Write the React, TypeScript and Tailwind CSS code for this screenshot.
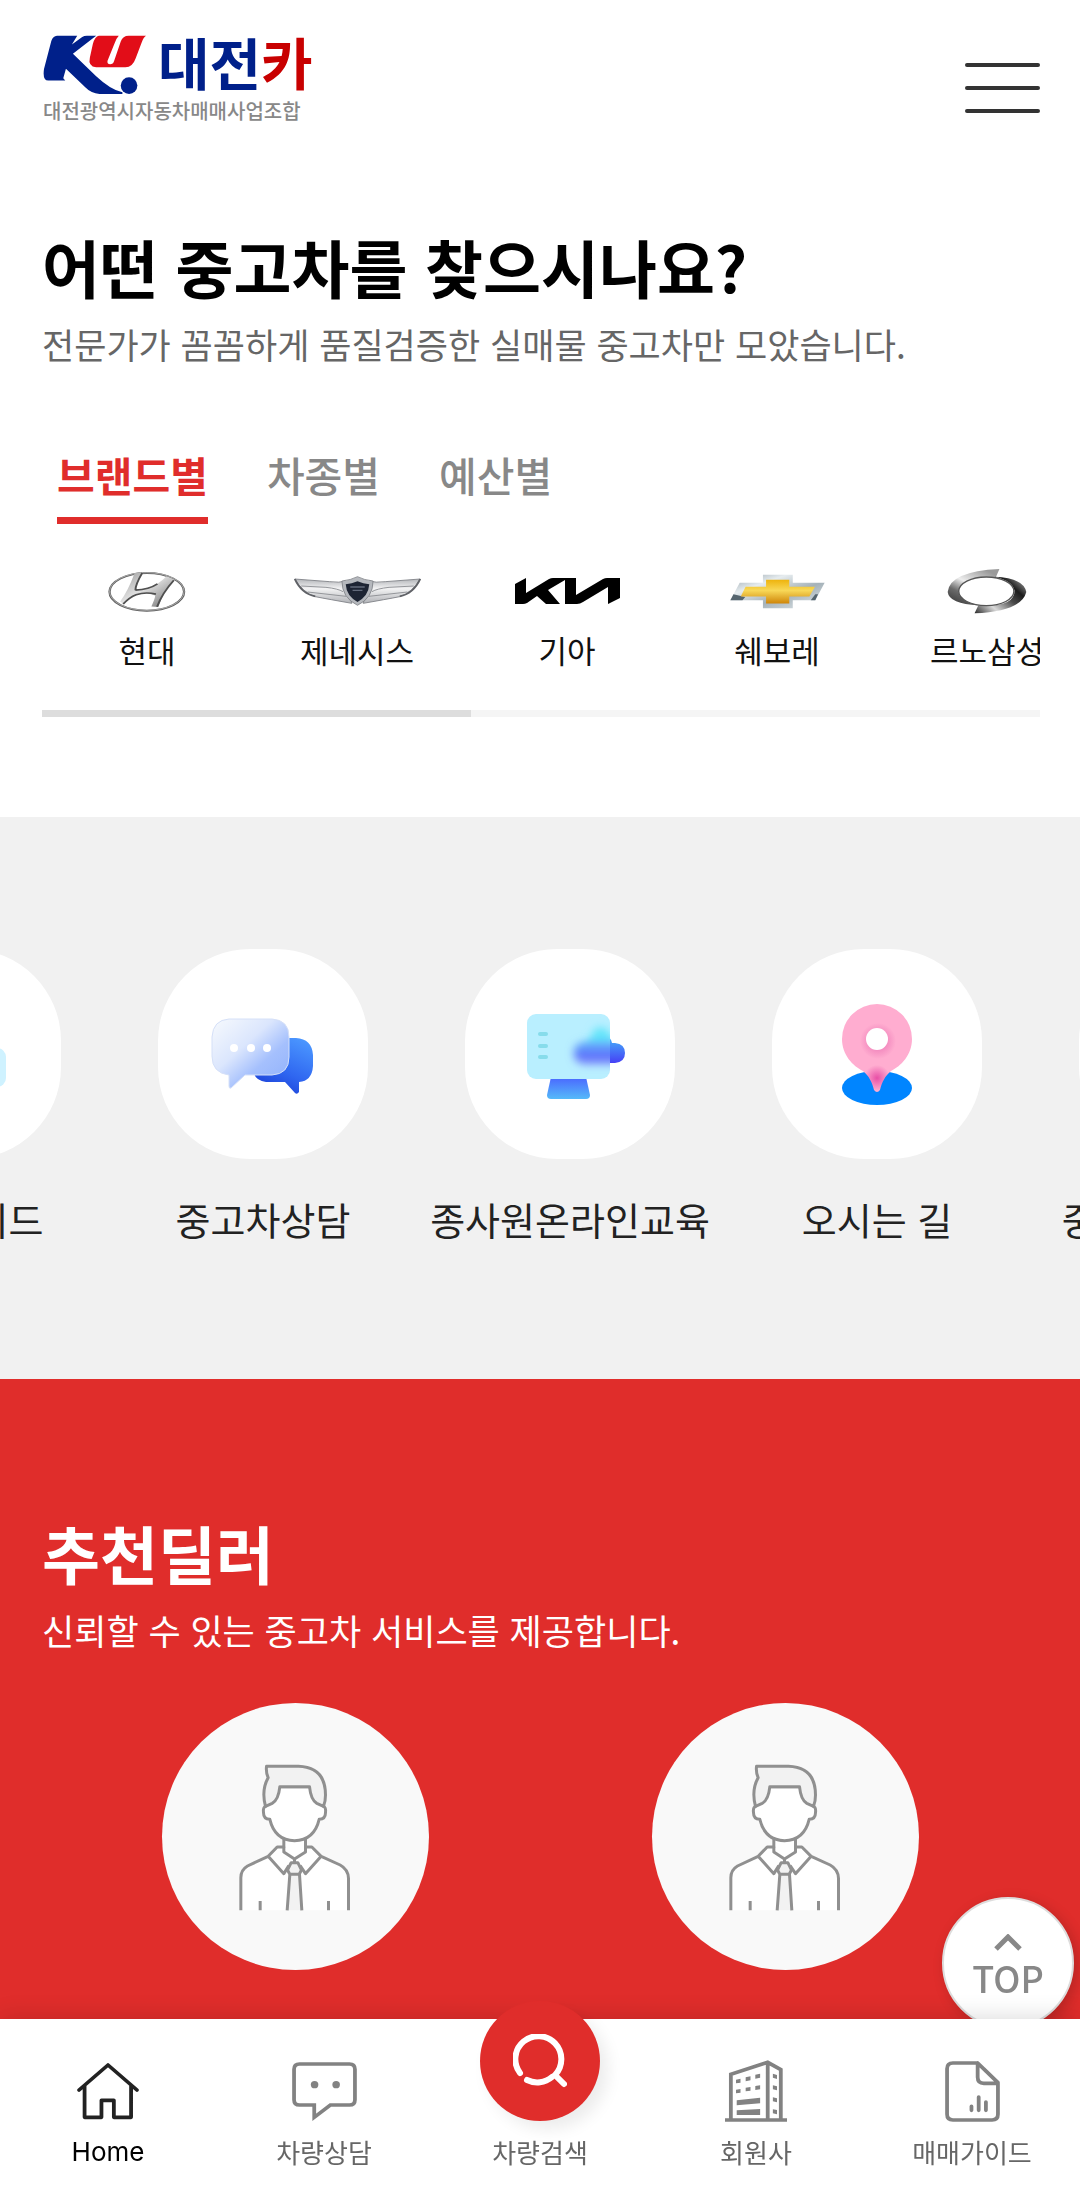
import React from "react";

const FONT = "font-['Noto_Sans_CJK_KR','Noto_Sans',sans-serif]";

function LogoMark() {
  return (
    <svg viewBox="130 108 310 180" className="h-[60px] w-[103px]" aria-hidden="true">
      <path
        fill="#00208a"
        d="M172 110H233L217 136L248 114Q254 110 262 110H290L220 164L290 232Q335 274 369 280V285H300Q275 284 258 266L199 209L191 238L197 245H146Q128 244 133 210L155 126Q160 111 172 110Z"
      />
      <path
        fill="#e20d18"
        d="M298 110H358Q350 118 344 136L324 186Q323 196 332 196Q341 196 344 186L364 127Q370 110 388 110H440Q433 114 427 130L409 178Q400 205 378 205H290Q265 202 271 176L280 135Q286 112 298 110Z"
      />
      <circle cx="389" cy="260" r="25" fill="#00208a" />
    </svg>
  );
}

function HyundaiLogo() {
  return (
    <svg viewBox="280 428 205 124" preserveAspectRatio="none" className="h-[41px] w-[78px]" aria-hidden="true">
      <defs>
        <linearGradient id="hy" x1="0" y1="0" x2="1" y2="1">
          <stop offset="0" stopColor="#9a9a9a" />
          <stop offset=".45" stopColor="#e0e0e0" />
          <stop offset="1" stopColor="#6a6a6a" />
        </linearGradient>
      </defs>
      <ellipse cx="382" cy="491" rx="98" ry="57" fill="none" stroke="#5e5e5e" strokeWidth="6" />
      <ellipse cx="382" cy="490" rx="98" ry="57" fill="none" stroke="#c4c4c4" strokeWidth="2" />
      <path
        fill="url(#hy)"
        d="M350 434L372 432Q352 470 355 484Q385 484 408 468Q424 456 434 444L455 454Q430 480 412 537L394 535Q404 510 404 502Q376 490 350 502Q334 512 322 529L312 520Q332 490 350 434Z"
      />
      <path
        d="M370 434Q352 470 352 486M320 528Q336 508 354 500Q378 490 406 498M409 536Q422 496 453 456M352 486Q388 484 410 467"
        fill="none"
        stroke="#4f4f4f"
        strokeWidth="5"
      />
    </svg>
  );
}

function GenesisLogo() {
  return (
    <svg viewBox="766 440 334 90" preserveAspectRatio="none" className="h-[30px] w-[127px]" aria-hidden="true">
      <defs>
        <linearGradient id="ge" x1="0" y1="0" x2="0" y2="1">
          <stop offset="0" stopColor="#b4b6ba" />
          <stop offset=".4" stopColor="#f3f3f4" />
          <stop offset="1" stopColor="#b0b2b6" />
        </linearGradient>
      </defs>
      <g fill="url(#ge)" stroke="#808288" strokeWidth="2.5">
        <path d="M768 449L860 457Q886 461 902 455L918 522Q858 510 822 502Q790 490 768 449Z" />
        <path d="M1098 449L1006 457Q980 461 964 455L948 522Q1008 510 1044 502Q1076 490 1098 449Z" />
      </g>
      <path d="M768 449Q786 494 822 501M1098 449Q1080 494 1044 501" fill="none" stroke="#5f6166" strokeWidth="5" />
      <path
        d="M785 470L850 474Q882 478 895 487M802 488L903 501M1081 470L1016 474Q984 478 971 487M1064 488L963 501"
        stroke="#8a8c91"
        strokeWidth="2.5"
        fill="none"
      />
      <path d="M933 442Q950 452 974 455Q974 505 933 528Q892 505 892 455Q916 452 933 442Z" fill="#b5b8bd" stroke="#74777c" strokeWidth="2" />
      <path d="M933 456Q948 463 964 465Q962 500 933 518Q904 500 902 465Q918 463 933 456Z" fill="#1d2433" />
      <path d="M914 473H952M920 483H946" stroke="#626a7b" strokeWidth="4" />
    </svg>
  );
}

function KiaLogo() {
  return (
    <svg viewBox="0 0 105 26" className="h-[26px] w-[105px]" aria-hidden="true">
      <path
        fill="#000"
        d="M0 6L11 0V15L34 1Q36 0 38 0H61V17L88 1Q90 0 92 0H105V20L93 26V9L68 24Q65 26 62 26H50V2L33 12L45 26H31L22 18L12 25Q10 26 8 26H0Z"
      />
    </svg>
  );
}

function ChevroletLogo() {
  return (
    <svg viewBox="552 100 274 104" preserveAspectRatio="none" className="h-[35px] w-[95px]" aria-hidden="true">
      <defs>
        <linearGradient id="ch" x1="0" y1="0" x2="0" y2="1">
          <stop offset="0" stopColor="#eeb30c" />
          <stop offset=".45" stopColor="#f8d858" />
          <stop offset="1" stopColor="#cf8508" />
        </linearGradient>
        <linearGradient id="chs" x1="0" y1="0" x2="1" y2="1">
          <stop offset="0" stopColor="#8d9ba3" />
          <stop offset=".3" stopColor="#e6ecef" />
          <stop offset=".6" stopColor="#a5b2b9" />
          <stop offset="1" stopColor="#e3e9ec" />
        </linearGradient>
      </defs>
      <path fill="url(#chs)" d="M647 102H733V126H825L798 178H733V202H647V178H553L580 126H647Z" />
      <path fill="#55656f" d="M553 178L562 160L596 168L588 178ZM785 178L798 160L806 160L798 178Z" />
      <path fill="url(#ch)" d="M656 117H723V138H797L781 167H723V188H656V167H583L597 138H656Z" />
    </svg>
  );
}

function RenaultLogo() {
  return (
    <svg viewBox="1182 84 232 138" preserveAspectRatio="none" className="h-[46px] w-[80px]" aria-hidden="true">
      <defs>
        <linearGradient id="re" x1="0" y1="1" x2=".7" y2="0">
          <stop offset="0" stopColor="#2e2e2e" />
          <stop offset=".35" stopColor="#6a6a6a" />
          <stop offset=".6" stopColor="#ededed" />
          <stop offset="1" stopColor="#9a9a9a" />
        </linearGradient>
        <linearGradient id="re2" x1="0" y1="1" x2="1" y2=".2">
          <stop offset="0" stopColor="#2a2a2a" />
          <stop offset=".3" stopColor="#dadada" />
          <stop offset=".6" stopColor="#4a4a4a" />
          <stop offset=".8" stopColor="#1c1c1c" />
          <stop offset="1" stopColor="#8a8a8a" />
        </linearGradient>
      </defs>
      <path fill="url(#re)" d="M1334 87L1324 111Q1218 104 1216 158Q1222 184 1274 196Q1188 192 1184 156Q1190 94 1334 87Z" />
      <path fill="url(#re2)" d="M1262 220L1273 196Q1378 202 1378 152Q1372 122 1320 110Q1404 114 1412 156Q1398 214 1262 220Z" />
      <ellipse cx="1296" cy="154" rx="80" ry="43" fill="none" stroke="#555" strokeWidth="4" />
    </svg>
  );
}

function GuideArt() {
  return (
    <svg viewBox="0 0 210 210" className="size-full" aria-hidden="true">
      <rect x="62" y="72" width="76" height="62" rx="10" fill="#8fdcff" />
      <rect x="98" y="99" width="57" height="39" rx="9" fill="#cff2ff" />
    </svg>
  );
}

function ChatArt() {
  return (
    <svg viewBox="0 0 210 210" className="size-full" aria-hidden="true">
      <defs>
        <linearGradient id="dk" x1=".8" y1="0" x2=".3" y2="1">
          <stop offset="0" stopColor="#4b97ff" />
          <stop offset=".6" stopColor="#2f66f0" />
          <stop offset="1" stopColor="#1a3ed6" />
        </linearGradient>
        <linearGradient id="lt" x1="0" y1="0" x2="1" y2="1">
          <stop offset="0" stopColor="#f7fafd" />
          <stop offset=".4" stopColor="#dbe6fd" />
          <stop offset=".65" stopColor="#a5c0fd" />
          <stop offset="1" stopColor="#8fb0fb" />
        </linearGradient>
      </defs>
      <path fill="url(#dk)" d="M108 89H138Q154 90 155 106V117Q154 132 141 133V143Q139 146 137 144L127 133H108Q95 131 95 119V102Q96 90 108 89Z" />
      <path fill="url(#lt)" stroke="#d5e0f8" d="M71 70H114Q131 71 131 88V108Q131 125 114 126H87L73 139Q71 140 71 137V126Q54 124 54 107V88Q55 71 71 70Z" />
      <g fill="#fff">
        <circle cx="76" cy="99" r="4" />
        <circle cx="93" cy="99" r="4" />
        <circle cx="109" cy="99" r="4" />
      </g>
    </svg>
  );
}

function MonitorArt() {
  return (
    <svg viewBox="0 0 210 210" className="size-full" aria-hidden="true">
      <defs>
        <linearGradient id="st" x1="0" y1="0" x2="0" y2="1">
          <stop offset="0" stopColor="#4a66ff" />
          <stop offset="1" stopColor="#55baf9" />
        </linearGradient>
        <linearGradient id="tb" x1="0" y1="0" x2="0" y2="1">
          <stop offset="0" stopColor="#45b4fa" />
          <stop offset="1" stopColor="#4640f5" />
        </linearGradient>
        <linearGradient id="gl" x1="0" y1="0" x2="0" y2="1">
          <stop offset="0" stopColor="#62b4fb" />
          <stop offset=".6" stopColor="#5c72fb" />
          <stop offset="1" stopColor="#7c86fb" />
        </linearGradient>
        <filter id="bl" x="-50%" y="-50%" width="200%" height="200%">
          <feGaussianBlur stdDeviation="4" />
        </filter>
        <clipPath id="mc">
          <rect x="62" y="65" width="83" height="65" rx="9" />
        </clipPath>
      </defs>
      <path fill="url(#tb)" d="M141 88Q146 88 147 94H150Q160 95 160 104Q160 113 150 114H141Z" />
      <path fill="url(#st)" d="M86 128H121L125 146Q125 150 121 150H86Q82 150 82 146Z" />
      <rect x="62" y="65" width="83" height="65" rx="9" fill="#b9efff" />
      <g clipPath="url(#mc)">
        <path filter="url(#bl)" fill="#62e4fa" d="M119 100L130 80Q142 74 150 94V100Z" />
        <rect filter="url(#bl)" x="109" y="93" width="54" height="22" rx="10" fill="url(#gl)" />
      </g>
      <path d="M75 85H81M75 97H81M75 108H81" stroke="#87dceb" strokeWidth="4" strokeLinecap="round" />
    </svg>
  );
}

function PinArt() {
  return (
    <svg viewBox="0 0 210 210" className="size-full" aria-hidden="true">
      <defs>
        <radialGradient id="pt" gradientUnits="userSpaceOnUse" cx="105" cy="129" r="13">
          <stop offset="0" stopColor="#e84fa6" />
          <stop offset="1" stopColor="#ffadd0" />
        </radialGradient>
        <radialGradient id="ph" gradientUnits="userSpaceOnUse" cx="106" cy="92" r="18">
          <stop offset=".5" stopColor="#f48dc0" />
          <stop offset="1" stopColor="#f48dc0" stopOpacity="0" />
        </radialGradient>
      </defs>
      <ellipse cx="105" cy="139" rx="35" ry="17" fill="#0085ff" />
      <path fill="url(#pt)" d="M70 90A35 35 0 0 1 140 90C140 106 129 117 119 122C113 127 110 133 108 141Q105 145 102 141C100 133 97 127 91 122C81 117 70 106 70 90Z" />
      <circle cx="106" cy="92" r="18" fill="url(#ph)" />
      <circle cx="105" cy="90" r="11" fill="#fff" />
    </svg>
  );
}

function DealerAvatar() {
  return (
    <svg viewBox="0 0 798 801" className="size-full" aria-hidden="true">
      <g transform="translate(-67 -39)" stroke="#909090" strokeWidth="9" strokeLinejoin="round">
        <path fill="#fff" d="M302 661V563Q302 540 322 528L384 499L411 471H431V445H496V471H515L543 499L600 525Q624 538 625 565V661" />
        <path fill="none" d="M431 470V486L463 507L496 486V470M384 499L431 551L446 527M543 499L496 551L480 527M463 507V518" />
        <path fill="#f2f2f2" d="M453 518H473L484 540L477 553H449L442 540ZM449 553L441 661H485L478 553Z" stroke="none" />
        <path fill="none" d="M453 518H473L484 540L477 553H449L442 540ZM449 553L441 661M478 553L485 661M360 661V633M565 661V633" />
        <path fill="#fff" d="M376 349Q368 352 370 368Q370 387 389 388Q404 451 463 452Q522 451 537 388Q556 387 556 368Q558 352 550 349L508 290H419Z" />
        <path fill="#f2f2f2" d="M379 229H475Q556 232 556 315Q556 335 550 349L530 340Q512 330 508 290H419Q415 330 396 340L376 349Q363 300 384 263Q377 250 379 229Z" />
      </g>
    </svg>
  );
}

function HomeIcon() {
  return (
    <svg viewBox="222 250 180 174" preserveAspectRatio="none" className="h-[58px] w-[62px]" aria-hidden="true">
      <path
        d="M228 334L312 259L396 334M244 322V416H293V365H329V416H379V322"
        fill="none"
        stroke="#222"
        strokeWidth="11"
        strokeLinecap="round"
        strokeLinejoin="round"
      />
    </svg>
  );
}

function ChatIcon() {
  return (
    <svg viewBox="850 249 190 186" preserveAspectRatio="none" className="h-[62px] w-[65px]" aria-hidden="true">
      <path
        d="M872 261H1018Q1034 261 1034 277V368Q1034 384 1018 384H962L915 421V384H872Q856 384 856 368V277Q856 261 872 261Z"
        fill="none"
        stroke="#828282"
        strokeWidth="11"
      />
      <circle cx="916" cy="323" r="11" fill="#828282" />
      <circle cx="979" cy="323" r="11" fill="#828282" />
    </svg>
  );
}

function SearchIcon() {
  return (
    <svg viewBox="0 0 54 54" className="size-[54px]" aria-hidden="true">
      <g fill="none" stroke="#fff" strokeWidth="6" strokeLinecap="round">
        <path d="M7 39A23 23 0 1 1 42 41L51 50" />
        <path d="M14 46A23 23 0 0 0 39 43" />
      </g>
    </svg>
  );
}

function BuildingIcon() {
  return (
    <svg viewBox="543 540 180 186" preserveAspectRatio="none" className="size-[62px]" aria-hidden="true">
      <path d="M543 720H723M560 720V583L667 547L705 569V720M667 547V720" fill="none" stroke="#828282" strokeWidth="11" />
      <path
        fill="#828282"
        d="M575 599L588 596V608L575 610ZM603 592L617 589V601L603 604ZM631 584L645 581V593L631 596ZM575 629L588 627V638L575 640ZM603 623L617 621V632L603 634ZM631 618L645 616V628L631 630ZM577 661L645 653V670L577 676ZM577 691L645 687V705H577ZM682 581L694 585V597L682 593ZM682 616L694 619V631L682 628ZM682 652L694 655V667L682 664ZM682 688L694 690V703L682 700Z"
      />
    </svg>
  );
}

function GuideIcon() {
  return (
    <svg viewBox="1179 543 160 183" preserveAspectRatio="none" className="h-[61px] w-[55px]" aria-hidden="true">
      <g fill="none" stroke="#828282" strokeWidth="11" strokeLinecap="round" strokeLinejoin="round">
        <path d="M1274 549H1202Q1185 549 1185 566V703Q1185 720 1202 720H1316Q1333 720 1333 703V608L1274 549V592Q1274 610 1292 610H1333" />
        <path d="M1256 679V691M1277 651V691M1298 666V691" />
      </g>
    </svg>
  );
}

const brands = [
  { name: "현대", logo: <HyundaiLogo /> },
  { name: "제네시스", logo: <GenesisLogo /> },
  { name: "기아", logo: <KiaLogo /> },
  { name: "쉐보레", logo: <ChevroletLogo /> },
  { name: "르노삼성", logo: <RenaultLogo /> },
];

const services = [
  { name: "매매가이드", art: <GuideArt /> },
  { name: "중고차상담", art: <ChatArt /> },
  { name: "종사원온라인교육", art: <MonitorArt /> },
  { name: "오시는 길", art: <PinArt /> },
  { name: "중고차시세조회", art: null },
];

const navItems = [
  { name: "Home", icon: <HomeIcon />, tone: "font-['Inter'] text-black" },
  { name: "차량상담", icon: <ChatIcon />, tone: "text-[#666]" },
  { name: "차량검색", icon: null, tone: "text-[#666]" },
  { name: "회원사", icon: <BuildingIcon />, tone: "text-[#666]" },
  { name: "매매가이드", icon: <GuideIcon />, tone: "text-[#666]" },
];

export default function App() {
  return (
    <div className={`${FONT} flex min-h-screen flex-col overflow-x-hidden bg-white`} lang="ko">
      <header className="flex items-start justify-between pt-[35px] pr-10 pl-[43px]">
        <a href="#home" className="block">
          <span className="flex h-[60px] items-start gap-[12px]">
            <LogoMark />
            <span className="text-[56px] leading-[52px] font-bold whitespace-nowrap text-[#00208a]">
              대전<span className="text-[#c80000]">카</span>
            </span>
          </span>
          <span className="mt-[2px] block text-[20px] leading-[28px] font-medium text-[#888]">대전광역시자동차매매사업조합</span>
        </a>
        <button type="button" aria-label="전체 메뉴" className="mt-[28px] flex flex-col gap-[19px]">
          <span className="h-1 w-[75px] rounded bg-[#333]" />
          <span className="h-1 w-[75px] rounded bg-[#333]" />
          <span className="h-1 w-[75px] rounded bg-[#333]" />
        </button>
      </header>

      <main className="flex flex-1 flex-col">
        <section className="pt-[101px] pr-10 pb-[100px] pl-[42px]">
          <h1 className="text-[63px] leading-[80px] font-bold whitespace-nowrap text-black">어떤 중고차를 찾으시나요?</h1>
          <p className="mt-3 text-[35px] leading-[52px] whitespace-nowrap text-[#666]">
            전문가가 꼼꼼하게 품질검증한 실매물 중고차만 모았습니다.
          </p>
          <div role="tablist" className="mt-[74px] flex gap-[59px] pl-[15px] text-[41px] leading-[60px] whitespace-nowrap">
            <button type="button" role="tab" aria-selected="true" className="border-b-[7px] border-[#e02d2b] pb-[13px] font-bold text-[#e02d2b]">
              브랜드별
            </button>
            <button type="button" role="tab" aria-selected="false" className="border-b-[7px] border-transparent pb-[13px] font-medium text-[#888]">
              차종별
            </button>
            <button type="button" role="tab" aria-selected="false" className="border-b-[7px] border-transparent pb-[13px] font-medium text-[#888]">
              예산별
            </button>
          </div>
          <ul className="mt-[43px] flex overflow-hidden">
            {brands.map((b) => (
              <li key={b.name} className="w-[210px] shrink-0">
                <a href="#brand" className="flex flex-col items-center">
                  <span className="flex h-12 items-center">{b.logo}</span>
                  <span className="mt-[13px] text-[31px] leading-[44px] whitespace-nowrap text-[#111]">{b.name}</span>
                </a>
              </li>
            ))}
          </ul>
          <div className="mt-[38px] h-[7px] bg-[#f5f5f5]">
            <div className="h-full w-[43%] bg-[#ddd]" />
          </div>
        </section>

        <section className="overflow-hidden bg-[#f1f1f1] pt-[132px] pb-[132px] pl-[60px]">
          <ul className="flex justify-center">
            {services.map((s) => (
              <li key={s.name} className="w-[307px] shrink-0">
                <a href="#service" className="flex flex-col items-center">
                  <span className="block size-[210px] rounded-[92px] bg-white">{s.art}</span>
                  <span className="mt-8 text-[38px] leading-[56px] whitespace-nowrap text-[#222]">{s.name}</span>
                </a>
              </li>
            ))}
          </ul>
        </section>

        <section className="flex-1 bg-[#e02d2b] pt-[133px] pb-[230px] text-white">
          <div className="px-[42px]">
            <h2 className="text-[63px] leading-[80px] font-bold">추천딜러</h2>
            <p className="mt-3 text-[35px] leading-[52px] whitespace-nowrap">신뢰할 수 있는 중고차 서비스를 제공합니다.</p>
          </div>
          <ul className="mt-[47px] grid grid-cols-2 px-[50px]">
            {[1, 2].map((n) => (
              <li key={n} className="flex justify-center">
                <a href="#dealer" aria-label={`추천딜러 ${n}`} className="block size-[267px] overflow-hidden rounded-full bg-[#f9f9f9]">
                  <DealerAvatar />
                </a>
              </li>
            ))}
          </ul>
        </section>
      </main>

      <button
        type="button"
        className="fixed right-[6px] bottom-[171px] flex size-[132px] flex-col items-center rounded-full border-2 border-[#ddd] bg-white pt-[35px] text-[36px] font-medium text-[#888] shadow-[4px_4px_14px_rgba(0,0,0,0.18)]"
      >
        <svg viewBox="0 0 28 17" className="h-[17px] w-[28px]" aria-hidden="true">
          <path d="M2 15L14 3L26 15" fill="none" stroke="#888" strokeWidth="5" />
        </svg>
        <span className="mt-1 leading-[44px]">TOP</span>
      </button>

      <nav className="fixed inset-x-0 bottom-0 bg-white shadow-[0_0_24px_rgba(0,0,0,0.16)]">
        <ul className="grid grid-cols-5">
          {navItems.map((item) => (
            <li key={item.name}>
              <a href="#nav" className="relative flex flex-col items-center pt-[41px] pb-[30px]">
                <span className="flex h-[62px] items-center">{item.icon}</span>
                {item.icon === null && (
                  <span className="absolute -top-[18px] flex size-[120px] items-center justify-center rounded-full bg-[#e02d2b] shadow-[8px_8px_16px_rgba(0,0,0,0.08)]">
                    <SearchIcon />
                  </span>
                )}
                <span className={`mt-3 text-[26px] leading-[36px] whitespace-nowrap ${item.tone}`}>{item.name}</span>
              </a>
            </li>
          ))}
        </ul>
      </nav>
    </div>
  );
}
